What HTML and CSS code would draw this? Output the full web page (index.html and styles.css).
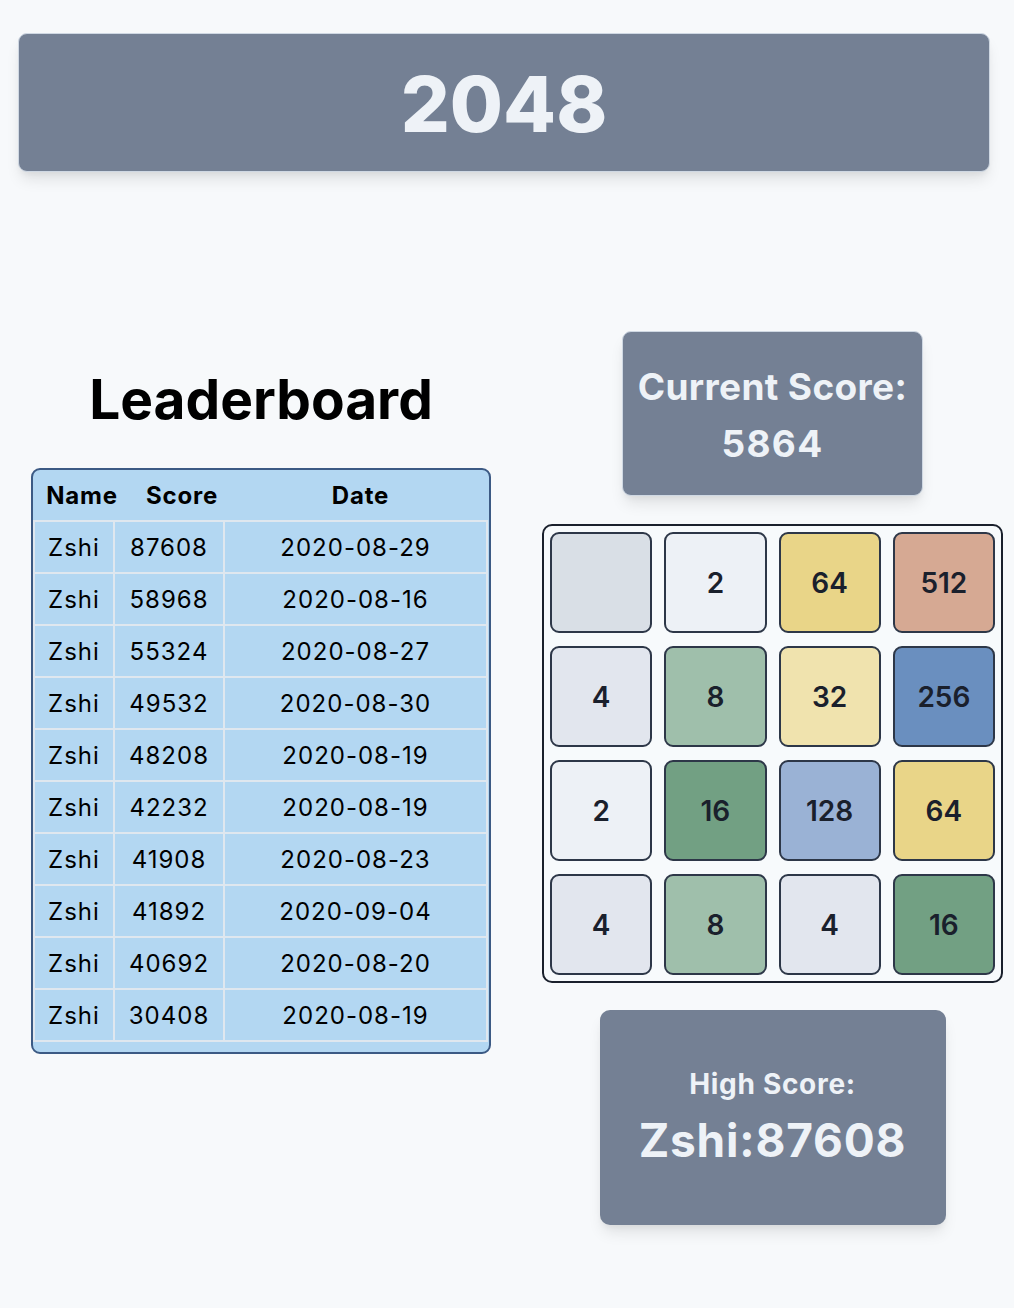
FILE: index.html
```html
<!DOCTYPE html>
<html lang="en">
<head>
<meta charset="utf-8">
<title>2048</title>
<link rel="stylesheet" href="styles.css">
</head>
<body>
<header class="title-bar"><h1 class="title">2048</h1></header>
<main class="layout">
  <section class="leader">
    <h2 class="leader-title">Leaderboard</h2>
    <div class="board-table">
      <table class="head">
        <colgroup><col class="h1"><col class="h2"><col></colgroup>
        <tr><th>Name</th><th>Score</th><th>Date</th></tr>
      </table>
      <table class="rows">
        <colgroup><col class="c1"><col class="c2"><col></colgroup>
        <tr><td>Zshi</td><td>87608</td><td>2020-08-29</td></tr>
        <tr><td>Zshi</td><td>58968</td><td>2020-08-16</td></tr>
        <tr><td>Zshi</td><td>55324</td><td>2020-08-27</td></tr>
        <tr><td>Zshi</td><td>49532</td><td>2020-08-30</td></tr>
        <tr><td>Zshi</td><td>48208</td><td>2020-08-19</td></tr>
        <tr><td>Zshi</td><td>42232</td><td>2020-08-19</td></tr>
        <tr><td>Zshi</td><td>41908</td><td>2020-08-23</td></tr>
        <tr><td>Zshi</td><td>41892</td><td>2020-09-04</td></tr>
        <tr><td>Zshi</td><td>40692</td><td>2020-08-20</td></tr>
        <tr><td>Zshi</td><td>30408</td><td>2020-08-19</td></tr>
      </table>
    </div>
  </section>
  <section class="game">
    <div class="score-card current">
      <p class="current-label">Current Score:</p>
      <p class="current-value">5864</p>
    </div>
    <div class="grid">
      <div class="tile t0"></div>
      <div class="tile t2">2</div>
      <div class="tile t64">64</div>
      <div class="tile t512">512</div>
      <div class="tile t4">4</div>
      <div class="tile t8">8</div>
      <div class="tile t32">32</div>
      <div class="tile t256">256</div>
      <div class="tile t2">2</div>
      <div class="tile t16">16</div>
      <div class="tile t128">128</div>
      <div class="tile t64">64</div>
      <div class="tile t4">4</div>
      <div class="tile t8">8</div>
      <div class="tile t4">4</div>
      <div class="tile t16">16</div>
    </div>
    <div class="score-card high">
      <p class="high-label">High Score:</p>
      <p class="high-value">Zshi:87608</p>
    </div>
  </section>
</main>
</body>
</html>
```
FILE: styles.css
```css
* { box-sizing: border-box; }
html, body { margin: 0; padding: 0; }
body {
  background: #f7f9fb;
  font-family: Inter, "Noto Sans", sans-serif;
  color: #000;
  width: 1014px;
  min-height: 1308px;
}
.title-bar {
  margin: 33px 24px 0 18px;
  height: 139px;
  background: #748094;
  border: 1px solid #cfd8e3;
  border-radius: 9px;
  box-shadow: 0 10px 15px -3px rgba(0,0,0,0.10), 0 4px 6px -2px rgba(0,0,0,0.05);
  display: flex;
  align-items: center;
  justify-content: center;
  padding-top: 4px;
}
.title {
  margin: 0;
  font-size: 77px;
  font-weight: 800;
  color: #eef2f7;
  line-height: 1;
}
.layout {
  display: flex;
  align-items: flex-start;
  padding: 159px 0 0 31px;
  gap: 51px;
}
.leader {
  width: 460px;
  display: flex;
  flex-direction: column;
  align-items: stretch;
}
.leader-title {
  margin: 35px 0 36px;
  text-align: center;
  font-size: 55px;
  font-weight: 700;
  line-height: 66px;
  color: #000;
}
.board-table {
  background: #b3d7f2;
  border: 2px solid #3c5a84;
  border-radius: 9px;
  padding: 0 1px 10px 0;
  overflow: hidden;
}
.board-table table {
  width: 100%;
  border-collapse: collapse;
  text-align: center;
}
.head th {
  height: 50px;
  padding: 1px 0 0;
  font-size: 24px;
  font-weight: 700;
  letter-spacing: 0.8px;
}
.head col.h1 { width: 98px; }
.head col.h2 { width: 102px; }
.rows col.c1 { width: 80px; }
.rows col.c2 { width: 110px; }
.rows td {
  border: 2px solid #dfe7ef;
  height: 52px;
  padding: 2px 0 0;
  font-size: 24px;
  font-weight: 400;
  letter-spacing: 1px;
  line-height: 46px;
}
.game {
  width: 461px;
  display: flex;
  flex-direction: column;
  align-items: center;
}
.score-card {
  background: #748094;
  color: #eef2f7;
  box-shadow: 0 10px 15px -3px rgba(0,0,0,0.10), 0 4px 6px -2px rgba(0,0,0,0.05);
  text-align: center;
}
.score-card p { margin: 0; font-weight: 700; }
.current {
  border: 1px solid #cfd8e3;
  border-radius: 9px;
  padding: 26px 15px 23px;
}
.current-label, .current-value {
  font-size: 37px;
  line-height: 57px;
}
.current-label { letter-spacing: 0.35px; }
.current-value { letter-spacing: 1.3px; }
.grid {
  margin-top: 28px;
  width: 461px;
  height: 459px;
  border: 2px solid #1a202c;
  border-radius: 10px;
  background: #f7fafc;
  display: grid;
  grid-template-columns: repeat(4, 1fr);
  grid-template-rows: repeat(4, 1fr);
  column-gap: 12px;
  row-gap: 13px;
  padding: 6px;
}
.tile {
  border: 2px solid #2d3748;
  border-radius: 9px;
  display: flex;
  align-items: center;
  justify-content: center;
  font-size: 28px;
  font-weight: 600;
  color: #1a202c;
}
.t0 { background: #d9dfe6; }
.t2 { background: #edf1f6; }
.t4 { background: #e2e6ee; }
.t8 { background: #9fbfab; }
.t16 { background: #72a083; }
.t32 { background: #f0e3ae; }
.t64 { background: #e9d588; }
.t128 { background: #9ab2d5; }
.t256 { background: #6a8fbf; }
.t512 { background: #d6a993; }
.high {
  margin-top: 27px;
  width: 346px;
  height: 215px;
  border-radius: 10px;
  display: flex;
  flex-direction: column;
  justify-content: center;
  align-items: center;
  padding-bottom: 2px;
}
.high-label {
  font-size: 28px;
  letter-spacing: 0.7px;
  line-height: 40px;
  margin-bottom: 6px !important;
}
.high-value {
  font-size: 46px;
  letter-spacing: 0.8px;
  line-height: 60px;
}
```
